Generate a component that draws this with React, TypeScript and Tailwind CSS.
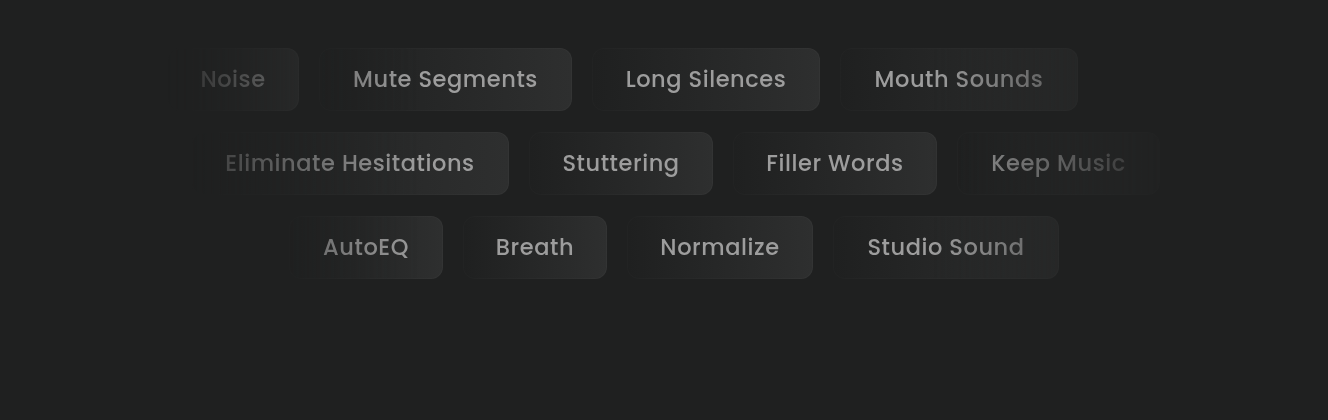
import React from 'react';

type Chip = { label: string; w: string };

const rows: { offset: string; chips: Chip[] }[] = [
    {
        offset: 'pl-[167px]',
        chips: [
            { label: 'Noise', w: 'w-[132px]' },
            { label: 'Mute Segments', w: 'w-[253px]' },
            { label: 'Long Silences', w: 'w-[228px]' },
            { label: 'Mouth Sounds', w: 'w-[238px]' },
        ],
    },
    {
        offset: 'pl-[191px]',
        chips: [
            { label: 'Eliminate Hesitations', w: 'w-[318px]' },
            { label: 'Stuttering', w: 'w-[184px]' },
            { label: 'Filler Words', w: 'w-[204px]' },
            { label: 'Keep Music', w: 'w-[203px]' },
        ],
    },
    {
        offset: 'pl-[289px]',
        chips: [
            { label: 'AutoEQ', w: 'w-[154px]' },
            { label: 'Breath', w: 'w-[144px]' },
            { label: 'Normalize', w: 'w-[186px]' },
            { label: 'Studio Sound', w: 'w-[226px]' },
        ],
    },
];

function FeatureChip({ chip }: { chip: Chip }) {
    return (
        <div className={`${chip.w} h-[63px] shrink-0 rounded-xl p-px bg-gradient-to-r from-white/[0.015] to-white/[0.09]`}>
            <div className="h-full w-full rounded-[11px] bg-gradient-to-r from-[#1f2020] to-[#2e2f2f] flex items-center justify-center">
                <span className="text-[22.5px] font-medium text-[#9d9d9d] tracking-[0.025em]">{chip.label}</span>
            </div>
        </div>
    );
}

export default function App() {
    return (
        <div
            className="w-[1328px] h-[420px] bg-[#1f2020] overflow-hidden pt-12"
            style={{ fontFamily: 'Poppins, Inter, "Noto Sans", sans-serif' }}
        >
            <div className="flex flex-col gap-y-[21px] [mask-image:linear-gradient(to_right,transparent_140px,black_420px,black_930px,transparent_1190px)]">
                {rows.map((row, i) => (
                    <div key={i} className={`flex gap-5 ${row.offset}`}>
                        {row.chips.map((c) => (
                            <FeatureChip key={c.label} chip={c} />
                        ))}
                    </div>
                ))}
            </div>
        </div>
    );
}
